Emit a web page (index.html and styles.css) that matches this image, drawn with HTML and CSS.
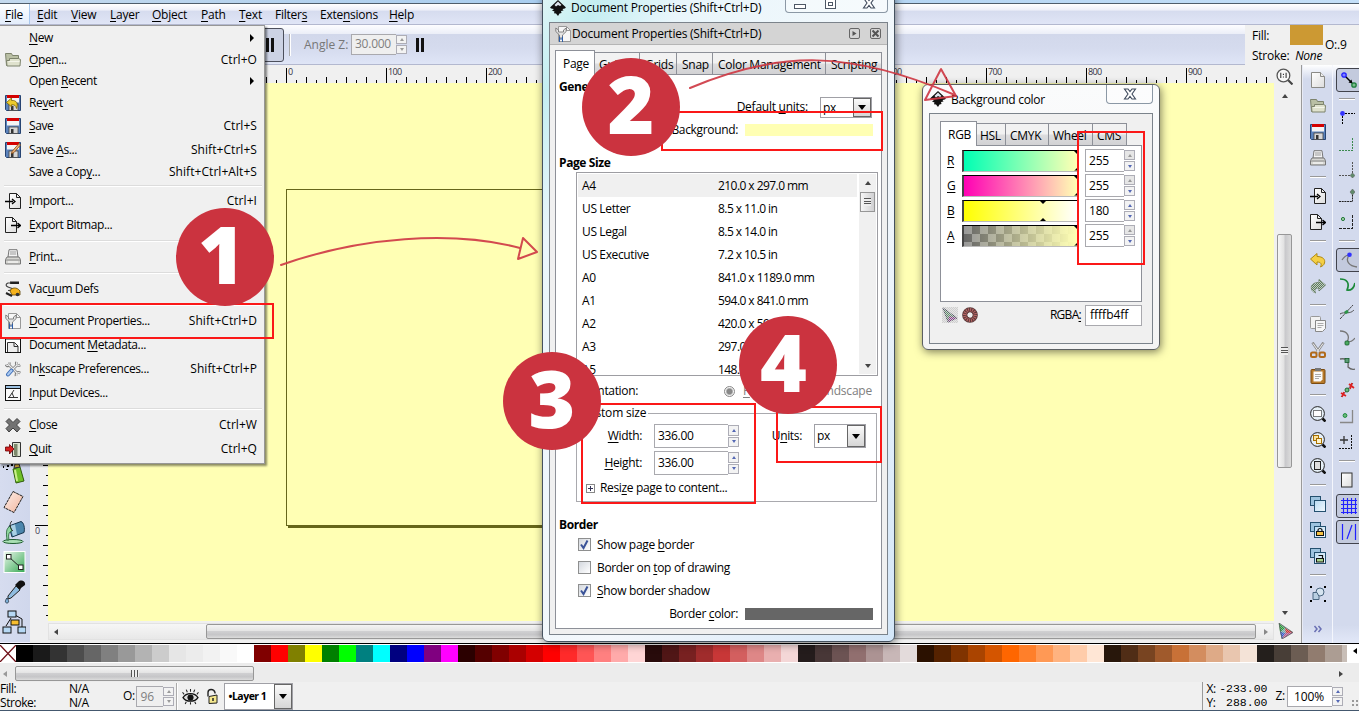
FILE: index.html
```html
<!DOCTYPE html>
<html lang="en">
<head>
<meta charset="utf-8">
<title>Inkscape</title>
<link rel="stylesheet" href="styles.css">
</head>
<body>
<svg class="sprite" aria-hidden="true">
  <defs>
    <linearGradient id="gPaper" x1="0" y1="0" x2="1" y2="1"><stop offset="0" stop-color="#fff"/><stop offset="1" stop-color="#ddd"/></linearGradient>
    <linearGradient id="gBlue" x1="0" y1="0" x2="1" y2="1"><stop offset="0" stop-color="#b9dbf3"/><stop offset="1" stop-color="#f2f9ff"/></linearGradient>
    <linearGradient id="gGreen" x1="0" y1="0" x2="1" y2="1"><stop offset="0" stop-color="#eef8ee"/><stop offset="1" stop-color="#35a853"/></linearGradient>
    <linearGradient id="gErase" x1="0" y1="0" x2="1" y2="1"><stop offset="0" stop-color="#fdf0ea"/><stop offset="1" stop-color="#f2b49c"/></linearGradient>
    <pattern id="pDots" width="2" height="2" patternUnits="userSpaceOnUse"><rect width="1" height="1" fill="#eee"/><rect x="1" y="1" width="1" height="1" fill="#eee"/></pattern>
    <symbol id="i-new" viewBox="0 0 16 16"><path d="M1.500.5h9l4 4v11h-13z" fill="url(#gPaper)" stroke="#8a8a86"/><path d="M10.500.5v4h4" fill="#eee" stroke="#8a8a86"/></symbol>
    <symbol id="i-open" viewBox="0 0 16 16"><path d="M.5 1.500h6l1 2h6v10H1.500z" fill="#b9bfa4" stroke="#7d836c"/><path d="M1.500 8.500h3v-2h9l2 1-.5 6.500h-13z" fill="#dfe2cd" stroke="#7d836c"/><path d="M3.500 9.500h11" stroke="#f4f5ea"/></symbol>
    <symbol id="i-save" viewBox="0 0 16 16"><path d="M.5.5h15v15h-14l-1-1z" fill="#5b83bd" stroke="#274472"/><rect x="2" y="0" width="12" height="7.500" fill="#f4f4f4"/><rect x="2" y="0" width="12" height="3" fill="#d40000"/><rect x="4" y="9" width="9" height="6.500" fill="#d6d6d6" stroke="#444" stroke-width=".8"/><rect x="6" y="11" width="2.500" height="4" fill="#333"/></symbol>
    <symbol id="i-revert" viewBox="0 0 16 16"><use href="#i-save"/><path d="M1.500 7.500l5-4.500v2.500c5-.500 7 3 5 8-.500-3-2-4-5-3.700v2z" fill="#eccb2c" stroke="#7a6200" stroke-width=".8"/></symbol>
    <symbol id="i-saveas" viewBox="0 0 16 16"><use href="#i-save"/><path d="M7 9.500l7-8 1.500 1.500-6.500 7.500-2.500 1z" fill="#e7b07a" stroke="#8a4b12" stroke-width=".8"/></symbol>
    <symbol id="i-import" viewBox="0 0 16 16"><path d="M4.500.5h7l4 4v11h-11z" fill="url(#gPaper)" stroke="#222"/><path d="M11.500.5v4h4" fill="none" stroke="#222"/><path d="M0 8.500h8M7 6l3 2.500L7 11" fill="none" stroke="#000" stroke-width="1.300"/></symbol>
    <symbol id="i-export" viewBox="0 0 16 16"><path d="M.5.5h7l4 4v11h-11z" fill="url(#gPaper)" stroke="#222"/><path d="M7.500.5v4h4" fill="none" stroke="#222"/><path d="M6 8.500h9M12.500 6l3 2.500-3 2.500" fill="none" stroke="#000" stroke-width="1.300"/></symbol>
    <symbol id="i-print" viewBox="0 0 16 16"><path d="M4 .7h8l1 7.500H3z" fill="#f4f4f4" stroke="#777"/><path d="M5 3h6M4.800 5h6.400" stroke="#999"/><path d="M2 8h12l1.500 2.500v4.500H.5v-4.500z" fill="#d6d6d2" stroke="#777"/><path d="M1 11h14" stroke="#888"/><path d="M3 13h10" stroke="#fff"/></symbol>
    <symbol id="i-vacuum" viewBox="0 0 16 16"><path d="M5 .5h9v2.500H5z" fill="#222"/><path d="M6 2H3c-2.500 1-2.500 3 0 4l4 1.500c1 1-1 2-4 2" fill="none" stroke="#444" stroke-width="1.200"/><path d="M5 10c1-3.500 7-4.500 10 0v4H7z" fill="#f5b21c" stroke="#5d4300" stroke-width=".8"/><path d="M1 12l6 3" stroke="#222" stroke-width="2"/><circle cx="12.500" cy="13.500" r="1.800" fill="#333"/></symbol>
    <symbol id="i-docprop" viewBox="0 0 16 16"><path d="M3.500.5h8l4 4v11h-12z" fill="#f6f6f6" stroke="#999"/><path d="M11.500.5v4h4" fill="none" stroke="#999"/><path d="M.8 2v3.500L4.500 9v3h3V9l3.700-3.500V2L8.500 4v2h-5V4z" fill="#e4e4e4" stroke="#777" stroke-width=".9"/><path d="M4.500 10.500v5.500m3-5.500v5.500M4.500 13h3" stroke="#2f5ea6"/></symbol>
    <symbol id="i-meta" viewBox="0 0 16 16"><rect x=".5" y="1" width="15" height="14.500" fill="#fff" stroke="#111"/><path d="M.5 1.500h15" stroke="#111" stroke-width="2"/><path d="M2.500 15V5.500h7l3.500 3.500v6" fill="#eee" stroke="#333"/><path d="M9 5.500v4h4" fill="none" stroke="#333"/></symbol>
    <symbol id="i-pref" viewBox="0 0 16 16"><g fill="none" stroke="#7d7d7d" stroke-width="2.600"><path d="M4.500 4.500l7 7M11.500 4.500l-4 4"/><path d="M1 3.500c1 2.500 3.500 1.500 3.500-2M11.500.8c-1 3 1 4.500 3.700 3.200M11 15c-.5-3 1.500-4.500 4.300-3"/></g><g fill="none" stroke="#ececec" stroke-width="1.100"><path d="M4 4l8 8M12 4L8 8"/><path d="M1.200 3.500c1 2 3 1 3-2M11.800 1c-1 2.500.8 4 3.200 3M11.300 15c-.5-2.500 1.500-4 3.800-3"/></g><path d="M6.500 9.500L3 13.500" stroke="#3f6fb8" stroke-width="4" stroke-linecap="round"/><path d="M6.500 9.500L3 13.500" stroke="#a9c8f0" stroke-width="2" stroke-linecap="round"/></symbol>
    <symbol id="i-input" viewBox="0 0 16 16"><rect x=".5" y=".5" width="15" height="15" fill="#fafafa" stroke="#111"/><path d="M1 2h14" stroke="#9cc0e0" stroke-width="2"/><path d="M1 3.500h14" stroke="#111"/><path d="M9 5L4 12.500M7 8l2 4.500M3 12.500h10" stroke="#333" fill="none"/></symbol>
    <symbol id="i-close" viewBox="0 0 16 16"><path d="M4 1.500l4 4 4-4 3 3L11.500 8l3.500 3.500-3 3.500-4-4-4 4-3-3.500L4.500 8 1 4.500z" fill="#727272" stroke="#3f3f3f"/></symbol>
    <symbol id="i-quit" viewBox="0 0 16 16"><path d="M7.500 1.500h8v14h-8z" fill="#dfe5d2" stroke="#333"/><path d="M9 3h3.500v13L9 14z" fill="#7d8a6d"/><path d="M.5 6h4V3.500L9 8l-4.500 5v-3h-4z" fill="#d42020" stroke="#6a0000" stroke-width=".8"/></symbol>
    <symbol id="i-undo" viewBox="0 0 16 16"><path d="M.5 7L7 1.500v3c6 0 8.500 3 7.500 6.500-.5 2-2 3-4 4 1.500-3 .5-5-3.500-5v3z" fill="#f4cf45" stroke="#b18a12"/></symbol>
    <symbol id="i-redo" viewBox="0 0 16 16"><path d="M15.500 7L9 1.500v3C3 4.500.5 7.500 1.500 11c.5 2 2 3 4 4-1.500-3-.5-5 3.500-5v3z" fill="#5b7b5b" stroke="#6a816a"/><path d="M15.500 7L9 1.500v3C3 4.500.5 7.500 1.500 11c.5 2 2 3 4 4-1.500-3-.5-5 3.500-5v3z" fill="url(#pDots)" opacity=".7"/></symbol>
    <symbol id="i-copy" viewBox="0 0 16 16"><rect x=".5" y=".5" width="10" height="12" rx="1" fill="#f2f2f2" stroke="#999"/><path d="M5.500 4.500h10v8l-3 3h-7z" fill="#f7f7f7" stroke="#888"/><path d="M7.500 7.500h6m-6 2h6m-6 2h4" stroke="#aaa"/></symbol>
    <symbol id="i-cut" viewBox="0 0 16 16"><path d="M2.500.5L9 10M13.500.5L7 10" stroke="#8c8c8c" stroke-width="2.600"/><path d="M3 1.500L9 10M13 1.500L7 10" stroke="#eee"/><rect x="1" y="10.500" width="5.500" height="4.500" rx="1.500" fill="none" stroke="#b06a1a" stroke-width="2"/><rect x="9.500" y="10.500" width="5.500" height="4.500" rx="1.500" fill="none" stroke="#b06a1a" stroke-width="2"/></symbol>
    <symbol id="i-paste" viewBox="0 0 16 16"><rect x="1" y="1.500" width="14" height="14" rx="1" fill="#b87a2a" stroke="#7a4b10"/><path d="M3.500 3.500h9v8l-2 2h-7z" fill="#fafafa"/><rect x="5" y="0" width="6" height="3" fill="#777"/><path d="M5 6.500h6m-6 2h6m-6 2h4" stroke="#aaa"/></symbol>
    <symbol id="i-lens" viewBox="0 0 16 16"><circle cx="7.500" cy="7.500" r="6.900" fill="#e6f0f8" stroke="#222"/><path d="M12.500 12.500l3 3" stroke="#111" stroke-width="2.600"/></symbol>
    <symbol id="i-zsel" viewBox="0 0 16 16"><use href="#i-lens"/><rect x="3.500" y="4.500" width="8" height="6" fill="#fff" stroke="#000" stroke-dasharray="1 1"/></symbol>
    <symbol id="i-zdraw" viewBox="0 0 16 16"><use href="#i-lens"/><rect x="3.500" y="3.500" width="5" height="5" fill="#fbe3a0" stroke="#a87000"/><rect x="6.500" y="6.500" width="5" height="5" fill="#fff4cc" stroke="#a87000"/></symbol>
    <symbol id="i-zpage" viewBox="0 0 16 16"><use href="#i-lens"/><rect x="4.500" y="3.500" width="6" height="8" fill="#ddd" stroke="#222"/></symbol>
    <symbol id="i-dup" viewBox="0 0 16 16"><rect x=".5" y=".5" width="10" height="9" fill="#9dc3df" stroke="#24506f"/><rect x="4.500" y="4.500" width="11" height="11" fill="url(#gBlue)" stroke="#24506f"/></symbol>
    <symbol id="i-clone" viewBox="0 0 16 16"><use href="#i-dup"/><path d="M8 9.500V8.500a2 2 0 014 0v1" fill="none" stroke="#111" stroke-width="1.200"/><rect x="6.500" y="9.500" width="7" height="4" fill="#f5c243" stroke="#111"/></symbol>
    <symbol id="i-unlink" viewBox="0 0 16 16"><use href="#i-dup"/><path d="M8.500 7.500h4v3" fill="none" stroke="#111" stroke-width="1.200"/><rect x="6.500" y="10.500" width="7" height="3.500" fill="#a9d58c" stroke="#111"/></symbol>
    <symbol id="i-group" viewBox="0 0 16 16"><path d="M0 0h2v2H0zM14 0h2v2h-2zM0 14h2v2H0zM14 14h2v2h-2z" fill="#000"/><circle cx="10" cy="6" r="4" fill="#d6e4f0" stroke="#4a6680"/><path d="M3 6.500h4l2 4v3H3z" fill="#b9cfe2" stroke="#4a6680"/></symbol>
    <symbol id="s-main" viewBox="0 0 16 16"><path d="M4 4l7 7" stroke="#000" stroke-width="1.400"/><path d="M11.500 11.500l-4-1 3-3z"/><circle cx="3" cy="3" r="2.200" fill="#8080ff" stroke="#22f" stroke-width="1.300"/><circle cx="13" cy="13" r="2.200" fill="#7bbd8b" stroke="#1d7d3c" stroke-width="1.300"/></symbol>
    <symbol id="s-bbox" viewBox="0 0 16 16"><path d="M3.500 3v12M3 3.500h13" stroke="#000" stroke-dasharray="2 1" fill="none"/><circle cx="3.500" cy="3.500" r="2.400" fill="#33f"/></symbol>
    <symbol id="s-edge" viewBox="0 0 16 16"><path d="M13.500 2v12M0 14.500h14" stroke="#3b8a4e" stroke-dasharray="2 1" fill="none"/></symbol>
    <symbol id="s-corner" viewBox="0 0 16 16"><path d="M13.500 0v11M0 13.500h11" stroke="#555" stroke-dasharray="2 1" fill="none"/><path d="M13.500 11l2.500 2.500-2.500 2.500-2.500-2.500z" fill="#5f8a6a" stroke="#555" stroke-width=".5"/></symbol>
    <symbol id="s-mid" viewBox="0 0 16 16"><path d="M13.500 4v9M0 13.500h14" stroke="#222" stroke-dasharray="2 .7" fill="none"/><path d="M13.500 1l2.500 3-2.500 3L11 4z" fill="#5f8a6a" stroke="#555" stroke-width=".5"/></symbol>
    <symbol id="s-center" viewBox="0 0 16 16"><path d="M13.500 1v13M0 14.500h14" stroke="#222" stroke-dasharray="3 1" fill="none"/><circle cx="4" cy="5" r="1.600" fill="#9fd0a5" stroke="#247a3a"/></symbol>
    <symbol id="s-node" viewBox="0 0 16 16"><path d="M1 8C5 2 6 4 8 3c-4 6 0 11 8 12" fill="none" stroke="#777" stroke-width="1.300"/><circle cx="8.500" cy="2.800" r="2.300" fill="#33f"/></symbol>
    <symbol id="s-path" viewBox="0 0 16 16"><path d="M1 1c7 0 10 4 7 11 4 1 7-2 8-7" fill="none" stroke="#1c8a3a" stroke-width="1.700"/></symbol>
    <symbol id="s-inter" viewBox="0 0 16 16"><path d="M1 15L14 1M1 10c5-3 9 1 14-4" fill="none" stroke="#444" stroke-dasharray="3 .5"/><path d="M6 9l3-2" stroke="#2c9548" stroke-width="3"/></symbol>
    <symbol id="s-cusp" viewBox="0 0 16 16"><path d="M1 1c8 0 10 6 7 11 4 0 6-1 8-4" fill="none" stroke="#777" stroke-width="1.300"/><rect x="6" y="11" width="4" height="4" rx="1" fill="#4cab62" stroke="#155d2a" stroke-width=".8"/></symbol>
    <symbol id="s-smooth" viewBox="0 0 16 16"><path d="M1 3c6-1 9 1 8 8 2 2 4 3 7 2" fill="none" stroke="#666" stroke-width="1.300"/><rect x="6" y="2.500" width="4" height="4" fill="#5b9c76" stroke="#155d2a" stroke-width=".8"/></symbol>
    <symbol id="s-line" viewBox="0 0 16 16"><path d="M2 15L14 1" stroke="#555"/><path d="M2 11l5 3M3 15l2-5M10 2l5 4M11 7l2-6" stroke="#d22" stroke-width="1.700"/><circle cx="8" cy="8" r="2" fill="#6cbb7e" stroke="#1c6a32"/></symbol>
    <symbol id="s-obj" viewBox="0 0 16 16"><path d="M13.500 2v12.500H1" stroke="#888" fill="none" stroke-width="1.300"/><circle cx="6" cy="7.500" r="1.900" fill="#6cbb7e" stroke="#1c8a3a"/></symbol>
    <symbol id="s-rot" viewBox="0 0 16 16"><path d="M5 2v8M1 6h8" stroke="#333" stroke-width="1.300"/><path d="M12.500 1v13M0 14.500h13" stroke="#111" stroke-dasharray="2 1" fill="none"/></symbol>
    <symbol id="s-page" viewBox="0 0 16 16"><rect x="2.500" y="1" width="10.500" height="14" fill="url(#gPaper)" stroke="#333"/></symbol>
    <symbol id="s-grid" viewBox="0 0 16 16"><path d="M2.500 0v16M6.500 0v16M10.500 0v16M14.500 0v16M0 2.500h16M0 6.500h16M0 10.500h16M0 14.500h16" stroke="#22f" stroke-width="1.100"/></symbol>
    <symbol id="s-guide" viewBox="0 0 16 16"><path d="M1.500 0v16M14.500 0v16M6 15L11 1" stroke="#22f" stroke-width="1.200"/></symbol>
    <symbol id="i-gamut" viewBox="0 0 16 16"><path d="M2 0L16 9.500 5 16z" fill="#7aa"/><path d="M2 0l6 5-5 4z" fill="#2a9a3a"/><path d="M8 5l8 4.500-7 1z" fill="#c33"/><path d="M3 9l5 1-3 6z" fill="#335ad0"/><path d="M8 10l8-.5L5 16z" fill="#b05a90"/><path d="M2 0L16 9.500 5 16z" fill="url(#pDots)" opacity=".45"/><path d="M2 0L16 9.500 5 16z" fill="none" stroke="#555" stroke-width=".7"/></symbol>
    <symbol id="i-logo" viewBox="0 0 16 16"><path d="M8 0l7.500 7c1 1-1 2-3 2l1 1.500-2.500.5.500 2-2 .5L8 16l-2-2.500-2-.3.500-1.700L2 10.500 4 9C1 9-.5 8 .5 7z" fill="#111"/><path d="M8 1.500l3.500 3.500-1.500 1-2-1-2 1.500L4.500 5z" fill="#dfe6ee"/></symbol>
    <symbol id="i-x" viewBox="0 0 14 12"><path d="M1.500 1h3.500l2 2.500L9 1h3.500L9 6l3.500 5H9L7 8.500 5 11H1.500L5 6z" fill="#fff" stroke="#3f4a5c" stroke-width="1.100"/></symbol>
  </defs>
</svg>

<div class="app">
  <div class="titlestrip"></div>
  <nav class="menubar">
    <span class="open"><u>F</u>ile</span><span><u>E</u>dit</span><span><u>V</u>iew</span><span><u>L</u>ayer</span><span><u>O</u>bject</span><span><u>P</u>ath</span><span><u>T</u>ext</span><span>Filter<u>s</u></span><span>Exte<u>n</u>sions</span><span><u>H</u>elp</span>
  </nav>
  <div class="toprow">
    <div class="toolbar">
      <div class="pressed"><i class="pause"></i></div>
      <i class="vsep"></i>
      <span class="angle">Angle Z:</span>
      <div class="spin off"><b>30.000</b><span class="arrows"><i></i><i></i></span></div>
      <i class="pause free"></i>
    </div>
    <div class="style">
      <div class="style-names"><span>Fill:</span><span>Stroke:&nbsp; <em>None</em></span></div>
      <div class="chip"></div>
      <span class="op">O:.9</span>
    </div>
  </div>
  <div class="work">
    <div class="tools">
      <svg viewBox="0 0 24 24"><path d="M11 9l7-2 4 14-8 2z" fill="#6fbf2a" stroke="#2e5c0b"/><path d="M13 10l2 11" stroke="#c9f08a" stroke-width="2"/><path d="M12 8l1-4h4l1 3z" fill="#e0b040" stroke="#333"/><path d="M2 2h2v2H2zM6 1h2v2H6zM5 5h2v2H5zM1 6h1v2H1zM9 4h2v2H9zM4 9h2v1H4z"/></svg>
      <svg viewBox="0 0 24 24"><path d="M11 1.500l10 5-9 16-10-5z" fill="url(#gErase)" stroke="#222" stroke-dasharray="3 .6"/></svg>
      <svg viewBox="0 0 24 24"><ellipse cx="11" cy="21.500" rx="10" ry="2" fill="#a9e0b4" stroke="#1e5c30"/><path d="M7 6L19 1.500c3 1 4 7 3 11L10 17z" fill="#4c86ad" stroke="#16344c"/><path d="M8 6l5-1.500 2 10-4 1.500z" fill="#a9cfe4"/><path d="M8 6c-4 3-4 6-3 14h2c-1-6 0-8 3-9z" fill="#8fd6a0" stroke="#1e5c30" stroke-width=".8"/><path d="M10 1c-3 2-2 8 1 10" fill="none" stroke="#333"/></svg>
      <svg viewBox="0 0 24 24"><rect x="2" y="1.500" width="21" height="21" fill="url(#gGreen)" stroke="#fff"/><path d="M7 7l11 10" stroke="#222"/><rect x="4.500" y="4.500" width="4.500" height="4.500" fill="#fff" stroke="#222"/><rect x="16.500" y="15" width="4.500" height="4.500" fill="#fff" stroke="#222"/></svg>
      <svg viewBox="0 0 24 24"><path d="M16 2c3-3 8-1 7 3l-4 3-1 2-5-5z" fill="#111"/><path d="M14 6l4 4-9 8-3 1 0-3z" fill="#8fbce0" stroke="#222"/><path d="M5 18c-3 4-1 5 0 5s3-1 0-5z" fill="#7eb2dc" stroke="#345"/></svg>
      <svg viewBox="0 0 24 24"><path d="M9 8L4 16M13 5l7 4v8" fill="none" stroke="#111"/><g fill="#b6d8f4" stroke="#111"><rect x="6" y="1" width="8" height="6"/><rect x="1" y="17" width="8" height="6"/><rect x="16" y="17" width="8" height="6"/></g><rect x="9" y="10" width="8" height="5" fill="#f7bd2e" stroke="#111"/></svg>
    </div>
    <div class="vruler"><span>0</span></div>
    <div class="center">
      <div class="hruler"><span class="t0">0</span><span class="t1">100</span><span class="t2">200</span><span class="t6">600</span><span class="t7">700</span><span class="t8">800</span><span class="t9">900</span></div>
      <div class="canvas"><div class="page"></div></div>
      <div class="hscroll"><i class="tri left"></i><div class="thumb"></div><i class="tri right"></i></div>
    </div>
    <div class="vscroll">
      <svg class="lens" viewBox="0 0 16 16"><circle cx="7" cy="7" r="6" fill="#f8f8f8" stroke="#555" stroke-width="1.200"/><path d="M11.500 11.500l4 4" stroke="#444" stroke-width="2"/><path d="M4.500 4.500v5M9.500 4.500v5M7 5.500v1M7 8v1" stroke="#333"/></svg>
      <i class="tri up"></i>
      <div class="vthumb"><i class="grip"></i></div>
      <i class="tri down"></i>
      <svg class="gamut"><use href="#i-gamut"/></svg>
    </div>
    <div class="cmds">
      <svg><use href="#i-new"/></svg><svg><use href="#i-open"/></svg><svg><use href="#i-save"/></svg><svg><use href="#i-print"/></svg><hr>
      <svg><use href="#i-import"/></svg><svg><use href="#i-export"/></svg><hr>
      <svg><use href="#i-undo"/></svg><svg><use href="#i-redo"/></svg><hr>
      <svg><use href="#i-copy"/></svg><svg><use href="#i-cut"/></svg><svg><use href="#i-paste"/></svg><hr>
      <svg><use href="#i-zsel"/></svg><svg><use href="#i-zdraw"/></svg><svg><use href="#i-zpage"/></svg><hr>
      <svg><use href="#i-dup"/></svg><svg><use href="#i-clone"/></svg><svg><use href="#i-unlink"/></svg><hr>
      <svg><use href="#i-group"/></svg>
      <svg class="more" viewBox="0 0 16 16"><path d="M4.500 5L7 8l-2.500 3M8.500 5L11 8l-2.500 3" fill="none" stroke="#6a70b4" stroke-width="1.500"/></svg>
    </div>
    <div class="snaps">
      <svg class="on"><use href="#s-main"/></svg><hr>
      <svg><use href="#s-bbox"/></svg><svg><use href="#s-edge"/></svg><svg><use href="#s-corner"/></svg><svg><use href="#s-mid"/></svg><svg><use href="#s-center"/></svg><hr>
      <svg class="on"><use href="#s-node"/></svg><svg><use href="#s-path"/></svg><svg><use href="#s-inter"/></svg><svg><use href="#s-cusp"/></svg><svg><use href="#s-smooth"/></svg><svg><use href="#s-line"/></svg><svg><use href="#s-obj"/></svg><svg><use href="#s-rot"/></svg><hr>
      <svg><use href="#s-page"/></svg><svg class="on"><use href="#s-grid"/></svg><svg class="on"><use href="#s-guide"/></svg>
    </div>
  </div>
  <div class="palette"><svg class="none" viewBox="0 0 16 17"><path d="M0 0l16 17M16 0L0 17" stroke="#701018" stroke-width="1.300"/></svg><div class="swatches" id="swatches"></div><i class="tri left black"></i></div>
  <div class="pscroll"><i class="tri left"></i><div class="thumb"><i class="grip v"></i></div><i class="tri right"></i></div>
  <div class="status">
    <div class="fs"><span>Fill:</span><span>N/A</span><span>Stroke:</span><span>N/A</span></div>
    <span class="olabel">O:</span>
    <div class="spin off o"><b>96</b><span class="arrows"><i></i><i></i></span></div>
    <i class="vsep"></i>
    <svg class="eye" viewBox="0 0 16 16"><path d="M1 9c3-5 11-5 14 0-3 4.500-11 4.500-14 0z" fill="#ddd" stroke="#111" stroke-width="1.300"/><circle cx="8" cy="9" r="2.900" fill="#111"/><path d="M2 6L.5 4M5 4L4 1.500M8 3.500V1M11 4l1-2.500M14 6l1.500-2M4 13l-1 2M8 13.500v2M12 13l1 2" stroke="#222"/></svg>
    <svg class="lock" viewBox="0 0 14 16"><path d="M2 8V4c0-4 6-4 7 0v1" fill="none" stroke="#222" stroke-width="1.400"/><path d="M3 8l8-1.500v8L3 15z" fill="#f4e78e" stroke="#222"/><path d="M7 9.500v3" stroke="#222" stroke-width="1.500"/></svg>
    <div class="combo layer"><b>•Layer 1</b><span class="drop"></span></div>
    <div class="coords"><span>X:</span><code>-233.00</code><span>Y:</span><code>288.00</code></div>
    <span class="zlabel">Z:</span>
    <div class="spin z"><b>100%</b><span class="arrows"><i></i><i></i></span></div>
    <i class="resize"></i>
  </div>
</div>

<div class="filemenu">
  <div class="row s20"><i></i><span><u>N</u>ew</span><i class="sub"></i></div>
  <div class="row s23"><svg><use href="#i-open"/></svg><span><u>O</u>pen...</span><kbd>Ctrl+O</kbd></div>
  <div class="row s20"><i></i><span>Open <u>R</u>ecent</span><i class="sub"></i></div>
  <div class="row s23"><svg><use href="#i-revert"/></svg><span>Re<u>v</u>ert</span></div>
  <div class="row"><svg><use href="#i-save"/></svg><span><u>S</u>ave</span><kbd>Ctrl+S</kbd></div>
  <div class="row"><svg><use href="#i-saveas"/></svg><span>Save <u>A</u>s...</span><kbd>Shift+Ctrl+S</kbd></div>
  <div class="row s20"><i></i><span>Save a Cop<u>y</u>...</span><kbd>Shift+Ctrl+Alt+S</kbd></div>
  <hr class="s7">
  <div class="row"><svg><use href="#i-import"/></svg><span><u>I</u>mport...</span><kbd>Ctrl+I</kbd></div>
  <div class="row"><svg><use href="#i-export"/></svg><span><u>E</u>xport Bitmap...</span></div>
  <hr>
  <div class="row"><svg><use href="#i-print"/></svg><span><u>P</u>rint...</span></div>
  <hr>
  <div class="row"><svg><use href="#i-vacuum"/></svg><span>Vac<u>u</u>um Defs</span></div>
  <hr>
  <div class="row"><svg><use href="#i-docprop"/></svg><span><u>D</u>ocument Properties...</span><kbd>Shift+Ctrl+D</kbd></div>
  <div class="row"><svg><use href="#i-meta"/></svg><span>Document <u>M</u>etadata...</span></div>
  <div class="row"><svg><use href="#i-pref"/></svg><span>In<u>k</u>scape Preferences...</span><kbd>Shift+Ctrl+P</kbd></div>
  <div class="row"><svg><use href="#i-input"/></svg><span><u>I</u>nput Devices...</span></div>
  <hr>
  <div class="row"><svg><use href="#i-close"/></svg><span><u>C</u>lose</span><kbd>Ctrl+W</kbd></div>
  <div class="row"><svg><use href="#i-quit"/></svg><span><u>Q</u>uit</span><kbd>Ctrl+Q</kbd></div>
</div>

<div class="window props">
  <div class="wtitle">
    <svg class="logo"><use href="#i-logo"/></svg><span>Document Properties (Shift+Ctrl+D)</span>
    <div class="winbtns"><i class="min"></i><i class="max"></i><svg><use href="#i-x"/></svg></div>
  </div>
  <div class="client">
    <div class="dockhead"><svg><use href="#i-docprop"/></svg><span>Document Properties (Shift+Ctrl+D)</span><i class="hb"><svg viewBox="0 0 9 9"><path d="M2.500 2l4 2.500-4 2.500z" fill="#555"/></svg></i><i class="hb"><svg viewBox="0 0 9 9"><path d="M1.500 1.500l6 6M7.500 1.500l-6 6" stroke="#555" stroke-width="2"/></svg></i></div>
    <div class="tabs"><span class="cur">Page</span><span>Guides</span><span>Grids</span><span>Snap</span><span>Color Management</span><span>Scripting</span></div>
    <div class="panel">
      <h4 class="h1">General</h4>
      <div class="line units"><label>Default <u>u</u>nits:</label><div class="combo"><b>px</b><span class="drop"></span></div></div>
      <div class="line bg"><label>Background:</label><i class="color y"></i></div>
      <h4 class="h2">Page Size</h4>
      <div class="list">
        <div class="rows">
          <p class="sel"><span>A4</span><span>210.0 x 297.0 mm</span></p>
          <p><span>US Letter</span><span>8.5 x 11.0 in</span></p>
          <p><span>US Legal</span><span>8.5 x 14.0 in</span></p>
          <p><span>US Executive</span><span>7.2 x 10.5 in</span></p>
          <p><span>A0</span><span>841.0 x 1189.0 mm</span></p>
          <p><span>A1</span><span>594.0 x 841.0 mm</span></p>
          <p><span>A2</span><span>420.0 x 594.0 mm</span></p>
          <p><span>A3</span><span>297.0 x 420.0 mm</span></p>
          <p><span>A5</span><span>148.0 x 210.0 mm</span></p>
        </div>
        <div class="lscroll"><i class="tri up"></i><div class="lthumb"><i class="grip"></i></div><i class="tri down"></i></div>
      </div>
      <div class="orient"><label>Orientation:</label><i class="radio"></i><span class="po"><u>P</u>ortrait</span><span class="la">Landscape</span></div>
      <div class="custom">
        <span class="legend">Custom size</span>
        <div class="line"><label><u>W</u>idth:</label><div class="spin"><b>336.00</b><span class="arrows"><i></i><i></i></span></div><label class="ul">U<u>n</u>its:</label><div class="combo"><b>px</b><span class="drop"></span></div></div>
        <div class="line"><label><u>H</u>eight:</label><div class="spin"><b>336.00</b><span class="arrows"><i></i><i></i></span></div></div>
        <div class="resizeto"><i class="plus"></i><span>Resi<u>z</u>e page to content...</span></div>
      </div>
      <h4 class="h3">Border</h4>
      <div class="check"><i class="box"><svg viewBox="0 0 11 11"><path d="M2 5.500L4.500 9 8.500 1.500" fill="none" stroke="#3a5398" stroke-width="2"/></svg></i><span>Show page <u>b</u>order</span></div>
      <div class="check"><i class="box"></i><span>Border on <u>t</u>op of drawing</span></div>
      <div class="check"><i class="box"><svg viewBox="0 0 11 11"><path d="M2 5.500L4.500 9 8.500 1.500" fill="none" stroke="#3a5398" stroke-width="2"/></svg></i><span><u>S</u>how border shadow</span></div>
      <div class="line bc"><label>Border <u>c</u>olor:</label><i class="color g"></i></div>
    </div>
  </div>
</div>

<div class="window colorwin">
  <div class="wtitle"><svg class="logo"><use href="#i-logo"/></svg><span>Background color</span><div class="winbtns"><svg><use href="#i-x"/></svg></div></div>
  <div class="client">
    <div class="tabs"><span class="cur">RGB</span><span>HSL</span><span>CMYK</span><span>Wheel</span><span>CMS</span></div>
    <div class="panel">
      <div class="chan"><u>R</u><div class="slider r"><i class="mark"></i></div><div class="spin max"><b>255</b><span class="arrows"><i></i><i></i></span></div></div>
      <div class="chan"><u>G</u><div class="slider gr"><i class="mark"></i></div><div class="spin max"><b>255</b><span class="arrows"><i></i><i></i></span></div></div>
      <div class="chan"><u>B</u><div class="slider b"><i class="mark mid"></i></div><div class="spin"><b>180</b><span class="arrows"><i></i><i></i></span></div></div>
      <div class="chan"><u>A</u><div class="slider a"><i class="mark"></i></div><div class="spin max"><b>255</b><span class="arrows"><i></i><i></i></span></div></div>
    </div>
    <div class="cfoot"><svg viewBox="0 0 16 16"><rect width="16" height="16" fill="#cfcfcf"/><path d="M1 1l14 10-9 4z" fill="#5f8a6a" stroke="#556"/><path d="M6 15l9-4-8-2z" fill="#848"/><rect width="16" height="16" fill="url(#pDots)" opacity=".75"/></svg><svg viewBox="0 0 16 16"><circle cx="8" cy="8" r="5.200" fill="none" stroke="#5b3a3a" stroke-width="5.300"/><circle cx="8" cy="8" r="5.200" fill="none" stroke="#b66" stroke-width="3.500" stroke-dasharray="1 1"/><circle cx="8" cy="8" r="2.400" fill="#eee"/></svg><label>RGBA<u>:</u></label><div class="hex">ffffb4ff</div></div>
  </div>
</div>

<svg class="arrows-over" width="1359" height="711">
  <g fill="none" stroke="#cf3b46" stroke-width="2" stroke-linecap="round" stroke-linejoin="round" opacity=".92">
    <path d="M281 265C360 237 452 230 520 248"/><path d="M523 238L537 252 518 259z"/>
    <path d="M690 88C780 50 850 50 955 95"/><path d="M941 69L925 100 956 96z"/>
  </g>
</svg>
<div class="mark-box m1"></div><div class="mark-box m2"></div><div class="mark-box m3"></div><div class="mark-box m4"></div><div class="mark-box m5"></div>
<div class="step n1">1</div><div class="step n2">2</div><div class="step n3">3</div><div class="step n4">4</div>
<script src="palette.js"></script>
</body>
</html>
```
FILE: styles.css
```css
* { box-sizing: border-box; }
body { margin: 0; width: 1359px; height: 711px; overflow: hidden; background: #f0f0f0; font: 12px/16px "Open Sans", "Noto Sans", sans-serif; letter-spacing: -0.34px; color: #000; white-space: nowrap; }
i, em, kbd, code, b { font-style: normal; font-family: inherit; font-weight: normal; }
i { display: block; flex: none; }
u { text-underline-offset: 2px; text-decoration-thickness: 1px; }
svg { display: block; flex: none; }
hr { margin: 0; border: 0; flex: none; }
.sprite { position: absolute; width: 0; height: 0; }

.app { display: flex; flex-direction: column; width: 1359px; height: 711px; border-bottom: 1px solid #44586e; }
.titlestrip { height: 4px; background: linear-gradient(90deg, #c3d9ee, #a9cdef 40%, #c4dff8); border-bottom: 1px solid #4f5d6b; flex: none; }
.menubar { height: 21px; flex: none; display: flex; background: linear-gradient(#fff 0, #eef0f9 30%, #d6dcef 36%, #e0e5f6 100%); border-bottom: 1px solid #b3b8cf; letter-spacing: -0.25px; }
.menubar span { padding: 3px 7px 0; width: 39px; flex: none; }
.menubar .open { width: 30px; padding-left: 5px; border-right: 1px solid #a8c8ee; background: linear-gradient(#fdfeff, #e3edfb); }
.menubar span:nth-child(2) { width: 34px; }
.menubar span:nth-child(4) { width: 42px; }
.menubar span:nth-child(5) { width: 49px; }
.menubar span:nth-child(6) { width: 38px; }
.menubar span:nth-child(7) { width: 36px; }
.menubar span:nth-child(8) { width: 45px; }
.menubar span:nth-child(9) { width: 69px; }

.toprow { display: flex; height: 40px; flex: none; }
.toolbar { width: 1245px; display: flex; align-items: center; padding-left: 250px; background: linear-gradient(#fdfdff 0, #eceff8 22%, #d2d8eb 24%, #d5dbee 60%, #dfe5f6 100%); border-bottom: 1px solid #b3b8cf; }
.pressed { width: 34px; height: 34px; border: 1px solid #4c4f5c; border-radius: 3px; background: #ccd2e4; display: flex; align-items: center; justify-content: flex-end; padding-right: 9px; }
.pause { width: 8px; height: 14px; border: solid #111; border-width: 0 3px; }
.vsep { width: 2px; height: 22px; border-left: 1px solid #aaa; border-right: 1px solid #fff; margin-left: 5px; }
.angle { color: #777; margin-left: 13px; width: 47px; letter-spacing: 0; }
.pause.free { margin-left: 9px; }
.toolbar .spin b { letter-spacing: -0.25px; }
.style { flex: 1; display: flex; padding-left: 7px; background: #f0f0f0; letter-spacing: -0.25px; }
.style-names { display: flex; flex-direction: column; padding-top: 1px; line-height: 20px; width: 38px; }
.style-names em { font-style: italic; }
.chip { width: 33px; height: 20px; background: #cc9933; }
.op { padding: 12px 0 0 2px; }

/* entry with a pair of stepper buttons */
.spin { display: flex; height: 21px; flex: none; }
.spin b { width: 45px; border: 1px solid #a9a9ae; border-right: 0; background: #fff; padding: 1px 0 0 3px; }
.spin.off b { background: #efefef; color: #808080; }
.arrows { display: flex; flex-direction: column; gap: 1px; width: 11px; padding: 1px 0; }
.arrows i { flex: 1; border: 1px solid #adadb6; background: #f3f3f3; display: flex; align-items: center; justify-content: center; }
.arrows i::before { content: ""; border: 2.500px solid transparent; border-top: 0; border-bottom: 3px solid #5468b4; }
.arrows i:last-child::before { border-bottom: 0; border-top: 3px solid #5468b4; }
.spin.off i::before, .spin.max i:first-child::before { border-bottom-color: #999; }
.spin.off i:last-child::before { border-top-color: #999; }
.spin.max i:first-child { background: #e6e6e6; }

.combo { display: flex; width: 52px; height: 21px; border: 1px solid #a0a0a6; background: #fff; flex: none; }
.combo b { flex: 1; padding: 2px 0 0 2px; }
.drop { width: 18px; border: 1px solid #666; background: linear-gradient(#fafafa, #d6d6d6); display: flex; align-items: center; justify-content: center; }
.drop::before { content: ""; border: 4px solid transparent; border-bottom: 0; border-top: 5px solid #000; }

.work { display: flex; height: 578px; flex: none; }
.tools { width: 30px; background: linear-gradient(90deg, #d6dcef, #d0d7ec); display: flex; flex-direction: column; justify-content: flex-end; padding: 0 0 8px 2px; gap: 6px; border-bottom: 1px solid #eef; }
.tools svg { width: 24px; height: 24px; }
.vruler { width: 18px; padding: 459px 0 0 5px; font-size: 9px; line-height: 14px; color: #445;
  background:
  linear-gradient(#000, #000) 5px 460px / 13px 1px no-repeat,
  repeating-linear-gradient(#000 0 1px, transparent 1px 20px) 100% 20px / 5px 536px no-repeat,
  repeating-linear-gradient(#000 0 1px, transparent 1px 20px) 100% 30px / 2px 526px no-repeat, #f0f0f0; }
.center { width: 1226px; display: flex; flex-direction: column; }
.hruler { height: 18px; position: relative; background:
  repeating-linear-gradient(90deg, #000 0 1px, transparent 1px 100px) 38px 100% / 1190px 15px no-repeat,
  repeating-linear-gradient(90deg, #000 0 1px, transparent 1px 20px) 18px 100% / 1210px 6px no-repeat,
  repeating-linear-gradient(90deg, #000 0 1px, transparent 1px 20px) 8px 100% / 1210px 3px no-repeat, #f0f0f0; }
.hruler span { position: absolute; top: 1px; font-size: 9px; line-height: 11px; color: #334; letter-spacing: -0.600px; }
.t0 { left: 240px; } .t1 { left: 340px; } .t2 { left: 440px; } .t6 { left: 840px; } .t7 { left: 940px; } .t8 { left: 1040px; } .t9 { left: 1140px; }
.canvas { height: 538px; background: #ffffb4; position: relative; overflow: hidden; }
.page { position: absolute; left: 238px; top: 106px; width: 336px; height: 337px; border: 1px solid #66661a; box-shadow: 2px 2px 0 #66661a; }
.hscroll { height: 17px; margin-top: 2px; display: flex; align-items: center; background: linear-gradient(#f6f6f6, #e8e8e8); border: 1px solid #e2e2e2; padding-left: 5px; }
.tri { width: 0; height: 0; border: 4px solid transparent; }
.tri.left { border-width: 3.500px 4px 3.500px 0; border-right-color: #444; }
.tri.right { border-width: 3.500px 0 3.500px 4px; border-left-color: #444; }
.tri.up { border-width: 0 3.500px 4px; border-bottom-color: #444; }
.tri.down { border-width: 4px 3.500px 0; border-top-color: #444; }
.thumb { height: 15px; border: 1px solid #979797; border-radius: 2px; background: linear-gradient(#f4f4f4 0, #e4e4e4 45%, #cfcfd1 50%, #c6c6c8 75%, #dcdcdc 100%); display: flex; align-items: center; justify-content: center; flex: none; }
.hscroll .thumb { width: 1050px; margin-left: 148px; }
.hscroll .right { margin-left: 8px; border-left-color: #888; }

.vscroll { width: 28px; background: #f0f0f0; border-right: 1px solid #9a9a9a; display: flex; flex-direction: column; align-items: center; padding-top: 3px; }
.vscroll .lens { width: 17px; height: 17px; margin-left: -6px; }
.vscroll .tri { margin-left: -5px; margin-top: 9px; }
.vthumb { width: 15px; height: 234px; margin: 136px 7px 0 0; border: 1px solid #979797; border-radius: 2px; background: linear-gradient(90deg, #f6f6f6, #e2e2e2 45%, #c8c8cb 55%, #dcdcdc); display: flex; align-items: center; justify-content: center; flex: none; }
.grip { width: 7px; height: 8px; background: repeating-linear-gradient(#555 0 1px, #eee 1px 2.500px); }
.grip.v { width: 8px; height: 7px; background: repeating-linear-gradient(90deg, #555 0 1px, #eee 1px 3px); }
.vscroll .tri.down { margin-top: 143px; }
.gamut { width: 16px; height: 16px; margin: 8px 0 0 -6px; }

.cmds, .snaps { display: flex; flex-direction: column; align-items: center; padding-top: 2px; background: linear-gradient(#fff 0, #d3daed 14px, #d3daed 560px, #e2e8f8); flex: none; }
.cmds { width: 30px; border-left: 1px solid #e8ebf5; }
.cmds svg, .snaps svg { width: 16px; height: 16px; margin: 5px 0; }
.cmds hr, .snaps hr { width: 16px; height: 2px; margin: 5px 0; background: linear-gradient(#999 50%, #fff 50%); }
.cmds .more { margin-top: 14px; }
.snaps { width: 27px; border-left: 1px solid #f4f6fc; padding-left: 2px; }
.snaps svg.on { width: 28px; height: 24px; margin: 1px -4px 1px 2px; padding: 3px 5px 3px 3px; border: 1px solid #41434c; border-radius: 3px; background: #c3cadd; }

.palette { display: flex; height: 20px; border-top: 1px solid #000; background: #fff; flex: none; padding-top: 1px; }
.palette .none { width: 16px; height: 17px; }
.swatches { display: flex; width: 1331px; height: 17px; overflow: hidden; }
.swatches i { width: 17px; height: 17px; }
.tri.black { margin: 3px 0 0 6px; border-right-color: #000; }
.pscroll { display: flex; align-items: center; height: 19px; flex: none; padding: 2px 0 0 3px; background: #ececec; }
.pscroll .thumb { width: 239px; margin-left: 8px; }
.pscroll .left { border-right-color: #999; }
.pscroll .right { margin-left: 1085px; }

.status { height: 28px; display: flex; align-items: center; background: #f0f0f0; flex: none; }
.fs { display: grid; grid-template-columns: 69px 54px; line-height: 14px; letter-spacing: -0.45px; }
.olabel { width: 14px; }
.spin.o b { width: 27px; }
.spin.o, .spin.z { letter-spacing: -0.1px; }
.spin.o b, .spin.z b { padding-top: 2px; }
.status .vsep { height: 27px; margin-left: 2px; }
.eye { width: 17px; height: 17px; margin-left: 4px; }
.lock { width: 14px; height: 17px; margin-left: 7px; }
.layer { width: 69px; height: 27px; margin-left: 4px; }
.layer b { font-weight: bold; font-size: 10.500px; padding: 4px 0 0 3px; letter-spacing: -0.500px; }
.coords { display: grid; grid-template-columns: 12px 49px; line-height: 14px; margin-left: 909px; border-left: 1px solid #999; padding-left: 3px; height: 28px; }
.coords code { font-family: "Liberation Mono", monospace; font-size: 11.500px; letter-spacing: 0; text-align: right; }
.zlabel { margin-left: 8px; width: 12px; }
.spin.z b { width: 45px; padding-left: 6px; }
.resize { width: 8px; height: 8px; margin: 14px 0 0 8px; background: radial-gradient(#999 1px, transparent 1.200px) 0 0 / 4px 4px; }

/* File menu */
.filemenu { position: absolute; left: -1px; top: 25px; width: 266px; height: 439px; background: #f0f0f0; border: 1px solid #979797; padding-top: 2px; box-shadow: 2px 2px 2px rgba(0,0,0,.45); }
.row { display: flex; align-items: center; height: 24px; padding: 0 7px 0 5px; }
.row.s20 { height: 20px; } .row.s23 { height: 23px; }
.row > svg, .row > i:first-child { width: 16px; height: 16px; margin-right: 8px; flex: none; }
.row span { flex: 1; letter-spacing: -0.38px; }
.row kbd { font-size: 12px; letter-spacing: 0.060px; }
.sub { width: 0; height: 0; border: 4px solid transparent; border-left: 4px solid #000; border-right: 0; margin-right: 3px; }
.filemenu hr { height: 8px; margin: 0 2px 0 4px; background: linear-gradient(#dcdcdc, #dcdcdc) 0 3px / 100% 1px no-repeat, linear-gradient(#fff, #fff) 0 4px / 100% 1px no-repeat; }
.filemenu hr.s7 { height: 7px; }

/* floating windows */
.window { position: absolute; border: 1px solid #45525f; border-radius: 0 0 6px 6px; box-shadow: 1px 2px 8px rgba(0,0,0,.5); }
.wtitle { display: flex; align-items: center; }
.logo { width: 16px; height: 16px; }
.client { border: 1px solid #7b838b; background: #f0f0f0; }
.winbtns { display: flex; border: 1px solid #8b98a5; border-top: 0; border-radius: 0 0 4px 4px; background: rgba(255,255,255,.35); }
.winbtns svg { width: 14px; height: 12px; }
.tabs { display: flex; align-items: flex-end; }
.tabs span { height: 22px; border: 1px solid #8d9098; border-bottom: 0; margin-right: -1px; background: linear-gradient(#f2f2f2 45%, #dcdcde 55%, #d2d2d4); padding: 4px 0 0 5px; flex: none; letter-spacing: -0.28px; }
.tabs .cur { background: #fff; padding-left: 7px; margin-bottom: -1px; height: 25px; position: relative; padding-top: 5px; }
.panel { border: 1px solid #8d9098; background: #fff; }

.props { left: 542px; top: -6px; width: 353px; height: 648px; background: linear-gradient(120deg, #dff6f5 0, #c4eef2 8%, #eaf6fb 20%, #f4f8fc 60%, #d3e6f8 100%); }
.props .wtitle { height: 27px; padding: 0 6px 0 7px; }
.props .wtitle .logo { margin-top: -1px; }
.props .wtitle span { margin: -2px 0 0 5px; flex: 1; letter-spacing: -0.210px; }
.props .winbtns { height: 18px; width: 103px; margin-bottom: 9px; align-items: flex-end; }
.props .winbtns i, .props .winbtns svg { margin-bottom: 3px; }
.props .min { width: 12px; height: 5px; border: 1px solid #4d5866; background: #fff; margin: 0 19px 4px 8px; }
.props .max { width: 11px; height: 10px; border: 1px solid #4d5866; background: #fff; box-shadow: inset 0 0 0 2px #fff, inset 0 0 0 3px #4d5866; }
.props .winbtns svg { margin-left: 26px; }
.props .client { margin: 0 6px 0 6px; height: 613px; }
.dockhead { display: flex; align-items: center; height: 22px; padding: 0 6px 0 5px; background: #d4d4d4; border-bottom: 1px solid #b5b5b5; margin-bottom: 5px; }
.dockhead > svg { width: 16px; height: 16px; }
.dockhead span { flex: 1; margin-left: 1px; letter-spacing: -0.240px; }
.hb { width: 11px; height: 11px; border: 1px solid #666; border-radius: 2px; margin-left: 10px; }
.hb svg { width: 9px; height: 9px; }
.props .tabs { padding-left: 5px; }
.props .tabs .cur { width: 40px; }
.props .tabs span:nth-child(2) { width: 46px; padding-left: 4px; }
.props .tabs span:nth-child(3) { width: 38px; padding-left: 5px; }
.props .tabs span:nth-child(4) { width: 37px; }
.props .tabs span:nth-child(5) { width: 114px; }
.props .tabs span:nth-child(6) { width: 57px; }
.props .panel { margin: 0 5px; height: 555px; padding: 0; }
h4 { margin: 0; font-size: 12px; line-height: 16px; font-weight: bold; padding-left: 3px; letter-spacing: -0.400px; }
.h1 { padding-top: 4px; height: 21px; }
.line { display: flex; align-items: center; }
.line label { text-align: right; flex: none; }
.units { height: 22px; letter-spacing: -0.25px; } .units label { width: 252px; } .units .combo { margin-left: 12px; }
.bg, .bc { height: 24px; } .bg label, .bc label { width: 182px; }
.color { width: 128px; height: 12px; margin-left: 7px; }
.color.y { background: #ffffb4; } .color.g { background: #666; }
.h2 { padding-top: 13px; height: 30px; }
.list { display: flex; margin-left: 20px; width: 302px; height: 204px; border: 1px solid #9d9da2; overflow: hidden; padding: 1px; }
.rows { width: 281px; }
.rows p { margin: 0; height: 23px; display: flex; padding: 4px 0 0 4px; }
.rows p span { width: 136px; flex: none; letter-spacing: -0.36px; }
.rows p span:last-child { letter-spacing: -0.56px; }
.rows .sel { background: #f0f0f0; }
.lscroll { width: 17px; background: #f0f0f0; margin-left: 2px; display: flex; flex-direction: column; align-items: center; padding-top: 7px; }
.lthumb { width: 15px; height: 20px; margin-top: 7px; border: 1px solid #979797; background: linear-gradient(90deg, #f6f6f6, #d0d0d2); display: flex; align-items: center; justify-content: center; }
.lscroll .down { margin-top: 152px; }
.orient { display: flex; align-items: center; height: 30px; color: #808080; }
.orient label { width: 82px; text-align: right; color: #000; }
.radio { width: 11px; height: 11px; border: 1px solid #888; border-radius: 50%; margin-left: 86px; background: radial-gradient(#888 0 2.500px, #f4f4f4 4px); }
.po { margin-left: 8px; width: 71px; } .la { letter-spacing: -0.2px; }
.custom { margin: 7px 0 0 20px; width: 301px; height: 89px; border: 1px solid #a9a9ae; position: relative; padding-top: 10px; }
.legend { position: absolute; left: 2px; top: -9px; background: #fff; padding: 0 2px; letter-spacing: -0.2px; }
.custom .line { height: 24px; margin-bottom: 3px; }
.custom .line label { width: 65px; }
.custom .spin, .custom .combo { height: 24px; }
.custom .spin { margin-left: 12px; }
.custom .spin b { width: 74px; padding-top: 3px; }
.custom .combo b { padding-top: 3px; }
.custom .line .ul { width: 63px; }
.custom .combo { margin-left: 12px; }
.resizeto { display: flex; align-items: center; margin-left: 9px; height: 20px; }
.plus { width: 9px; height: 9px; border: 1px solid #888; background: linear-gradient(#335,#335) 50% 50% / 5px 1px no-repeat, linear-gradient(#335,#335) 50% 50% / 1px 5px no-repeat, #fff; margin-right: 5px; }
.h3 { padding-top: 15px; height: 31px; }
.check { display: flex; align-items: center; height: 23px; padding-left: 22px; }
.box { width: 13px; height: 13px; border: 1px solid #8e8f8f; background: linear-gradient(135deg, #d4d8de, #fff); margin-right: 6px; }
.box svg { width: 11px; height: 11px; }

.colorwin { left: 922px; top: 84px; width: 238px; height: 266px; border-radius: 6px; background: linear-gradient(#fafbfc, #f4f4f4); border-color: #5b5f62; }
.colorwin .wtitle { height: 28px; padding: 0 6px 0 7px; }
.colorwin .wtitle span { margin-left: 5px; margin-top: 1px; flex: 1; letter-spacing: -0.280px; }
.colorwin .winbtns { width: 47px; height: 19px; margin-bottom: 9px; justify-content: center; align-items: center; }
.colorwin .client { margin: 0 6px; height: 231px; padding: 7px 10px 0; }
.colorwin .tabs .cur { width: 37px; }
.colorwin .tabs span:nth-child(2) { width: 30px; padding-left: 3px; }
.colorwin .tabs span:nth-child(3) { width: 44px; padding-left: 4px; }
.colorwin .tabs span:nth-child(4) { width: 45px; padding-left: 4px; }
.colorwin .tabs span:nth-child(5) { width: 35px; padding-left: 4px; }
.colorwin .panel { width: 202px; height: 157px; padding-top: 2px; }
.chan { display: flex; align-items: center; height: 25px; padding-left: 6px; }
.chan > u { width: 15px; }
.slider { width: 115px; height: 22px; border: 1px solid #000; border-right: 0; border-left-width: 2px; border-left-color: #444; border-bottom-color: #bbb; position: relative; flex: none; }
.slider.r { background: linear-gradient(90deg, #00ffb4, #ffffb4); }
.slider.gr { background: linear-gradient(90deg, #ff00b4, #ffffb4); }
.slider.b { background: linear-gradient(90deg, #ffff00, #fff); }
.slider.a { background: linear-gradient(90deg, rgba(255,255,180,0), #ffffb4), repeating-conic-gradient(#666 0 25%, #999 0 50%) 0 0 / 16px 16px; }
.mark { position: absolute; inset: 0 -3px 0 auto; width: 6px; clip-path: inset(0 3px 0 0); }
.mark::before, .mark::after { content: ""; position: absolute; left: 0; border: 3px solid transparent; }
.mark::before { top: 0; border-top-color: #000; border-bottom: 0; } .mark::after { bottom: 0; border-bottom-color: #000; border-top: 0; }
.mark.mid { right: 31px; clip-path: none; }
.chan .spin { margin-left: 8px; height: 23px; letter-spacing: -0.2px; }
.chan .spin b { width: 39px; padding-top: 3px; }
.cfoot { display: flex; align-items: center; height: 26px; gap: 4px; padding-left: 2px; }
.cfoot svg { width: 16px; height: 16px; }
.cfoot label { width: 104px; text-align: right; letter-spacing: -0.7px; padding-right: 0; }
.hex { width: 57px; height: 21px; border: 1px solid #a9a9ae; background: #fff; padding: 1px 0 0 4px; letter-spacing: 0; flex: none; }

/* callouts */
.arrows-over { position: absolute; left: 0; top: 0; }
.mark-box { position: absolute; border: 2px solid #fb1818; }
.m1 { left: 0; top: 303px; width: 274px; height: 36px; }
.m2 { left: 661px; top: 111px; width: 222px; height: 40px; }
.m3 { left: 581px; top: 403px; width: 175px; height: 101px; }
.m4 { left: 776px; top: 406px; width: 106px; height: 57px; }
.m5 { left: 1077px; top: 131px; width: 68px; height: 134px; }
.step { position: absolute; width: 98px; height: 98px; border-radius: 50%; background: #cb333f; color: #fff; font: 800 80px/90px "Open Sans", sans-serif; letter-spacing: 0; text-align: center; }
.n1 { left: 176px; top: 208px; padding-right: 7px; } .n2 { left: 582px; top: 58px; } .n3 { left: 503px; top: 352px; } .n4 { left: 739px; top: 316px; padding-right: 9px; }
```
FILE: palette.js
```js
const colors = (
  "000000 1a1a1a 333333 4d4d4d 666666 808080 999999 b3b3b3 cccccc e6e6e6 ececec f2f2f2 f9f9f9 ffffff " +
  "800000 ff0000 808000 ffff00 008000 00ff00 008080 00ffff 000080 0000ff 800080 ff00ff " +
  "2b0000 550000 800000 aa0000 d40000 ff0000 ff2a2a ff5555 ff8080 ffaaaa ffd5d5 " +
  "280b0b 501616 782121 a02c2c c83737 d35f5f de8787 e9afaf f4d7d7 " +
  "241c1c 483737 6c5353 916f6f ac9393 c8b7b7 e3dbdb " +
  "2b1100 552200 803300 aa4400 d45500 ff6600 ff7f2a ff9955 ffb380 ffccaa ffe6d5 " +
  "28170b 502d16 784421 a05a2c c87137 d38d5f deaa87 e9c6af f4e3d7 " +
  "241f1c 483e37 6c5d53 917c6f ac9d93 c8beb7"
).split(" ");
const strip = document.getElementById("swatches");
for (const c of colors) {
  const cell = document.createElement("i");
  cell.style.background = "#" + c;
  strip.appendChild(cell);
}
```
